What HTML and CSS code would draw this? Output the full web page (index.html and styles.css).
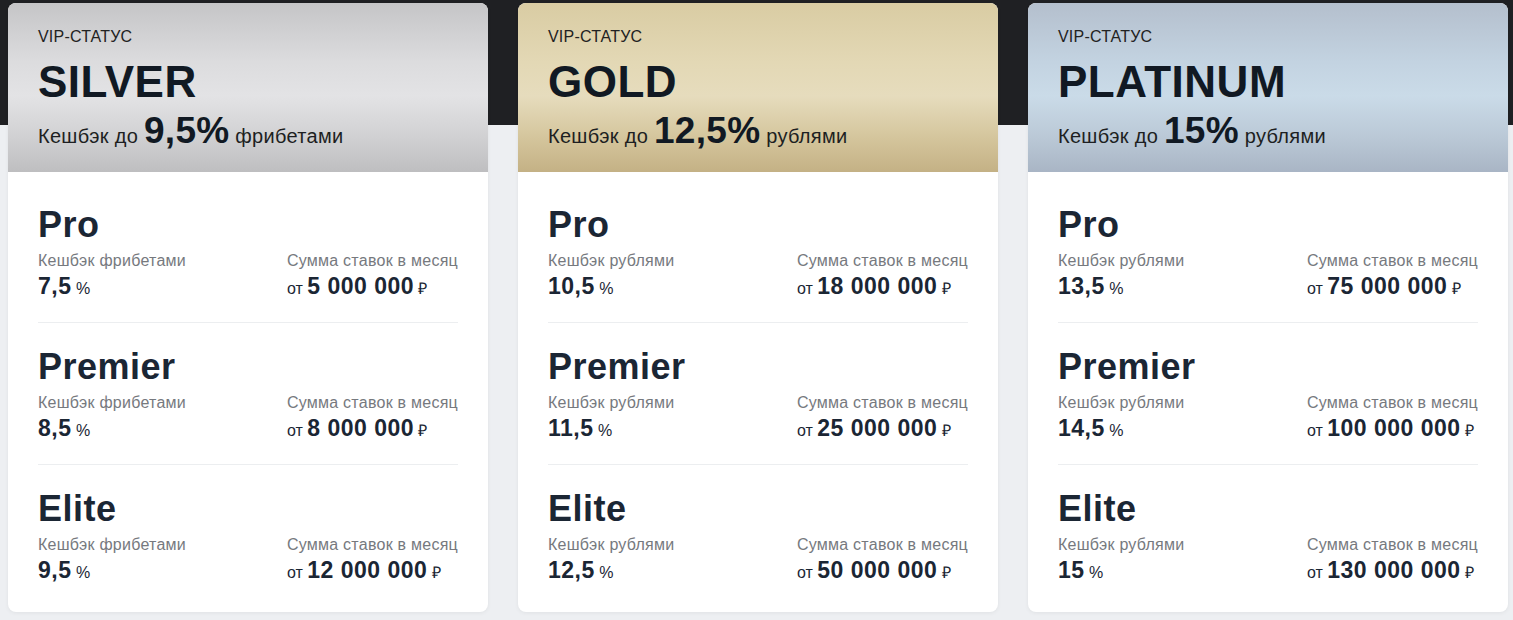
FILE: index.html
```html
<!DOCTYPE html>
<html lang="ru">
<head>
<meta charset="utf-8">
<link rel="stylesheet" href="styles.css">
</head>
<body>
<div class="page">
  <div class="cards">
    <section class="card">
      <header class="head silver">
        <div class="kicker">VIP-СТАТУС</div>
        <div class="level">SILVER</div>
        <div class="cb">Кешбэк до <b>9,5%</b> фрибетами</div>
      </header>
      <div class="body">
        <div class="row">
          <div class="tier">Pro</div>
          <div class="cols">
            <div class="col"><div class="lbl">Кешбэк фрибетами</div><div class="val"><b>7,5</b> %</div></div>
            <div class="col"><div class="lbl">Сумма ставок в месяц</div><div class="val">от <b>5 000 000</b> ₽</div></div>
          </div>
        </div>
        <div class="row">
          <div class="tier">Premier</div>
          <div class="cols">
            <div class="col"><div class="lbl">Кешбэк фрибетами</div><div class="val"><b>8,5</b> %</div></div>
            <div class="col"><div class="lbl">Сумма ставок в месяц</div><div class="val">от <b>8 000 000</b> ₽</div></div>
          </div>
        </div>
        <div class="row">
          <div class="tier">Elite</div>
          <div class="cols">
            <div class="col"><div class="lbl">Кешбэк фрибетами</div><div class="val"><b>9,5</b> %</div></div>
            <div class="col"><div class="lbl">Сумма ставок в месяц</div><div class="val">от <b>12 000 000</b> ₽</div></div>
          </div>
        </div>
      </div>
    </section>

    <section class="card">
      <header class="head gold">
        <div class="kicker">VIP-СТАТУС</div>
        <div class="level">GOLD</div>
        <div class="cb">Кешбэк до <b>12,5%</b> рублями</div>
      </header>
      <div class="body">
        <div class="row">
          <div class="tier">Pro</div>
          <div class="cols">
            <div class="col"><div class="lbl">Кешбэк рублями</div><div class="val"><b>10,5</b> %</div></div>
            <div class="col"><div class="lbl">Сумма ставок в месяц</div><div class="val">от <b>18 000 000</b> ₽</div></div>
          </div>
        </div>
        <div class="row">
          <div class="tier">Premier</div>
          <div class="cols">
            <div class="col"><div class="lbl">Кешбэк рублями</div><div class="val"><b>11,5</b> %</div></div>
            <div class="col"><div class="lbl">Сумма ставок в месяц</div><div class="val">от <b>25 000 000</b> ₽</div></div>
          </div>
        </div>
        <div class="row">
          <div class="tier">Elite</div>
          <div class="cols">
            <div class="col"><div class="lbl">Кешбэк рублями</div><div class="val"><b>12,5</b> %</div></div>
            <div class="col"><div class="lbl">Сумма ставок в месяц</div><div class="val">от <b>50 000 000</b> ₽</div></div>
          </div>
        </div>
      </div>
    </section>

    <section class="card">
      <header class="head platinum">
        <div class="kicker">VIP-СТАТУС</div>
        <div class="level">PLATINUM</div>
        <div class="cb">Кешбэк до <b>15%</b> рублями</div>
      </header>
      <div class="body">
        <div class="row">
          <div class="tier">Pro</div>
          <div class="cols">
            <div class="col"><div class="lbl">Кешбэк рублями</div><div class="val"><b>13,5</b> %</div></div>
            <div class="col"><div class="lbl">Сумма ставок в месяц</div><div class="val">от <b>75 000 000</b> ₽</div></div>
          </div>
        </div>
        <div class="row">
          <div class="tier">Premier</div>
          <div class="cols">
            <div class="col"><div class="lbl">Кешбэк рублями</div><div class="val"><b>14,5</b> %</div></div>
            <div class="col"><div class="lbl">Сумма ставок в месяц</div><div class="val">от <b>100 000 000</b> ₽</div></div>
          </div>
        </div>
        <div class="row">
          <div class="tier">Elite</div>
          <div class="cols">
            <div class="col"><div class="lbl">Кешбэк рублями</div><div class="val"><b>15</b> %</div></div>
            <div class="col"><div class="lbl">Сумма ставок в месяц</div><div class="val">от <b>130 000 000</b> ₽</div></div>
          </div>
        </div>
      </div>
    </section>
  </div>
</div>
</body>
</html>
```

FILE: styles.css
```css
* { box-sizing: border-box; }
html, body { margin: 0; padding: 0; }
body {
  font-family: "Liberation Sans", Arial, sans-serif;
  background: #edeff2;
  overflow: hidden;
}
.page {
  min-height: 620px;
  background: linear-gradient(to bottom, #1f2023 0, #1f2023 125px, #edeff2 125px);
  padding: 3px 8px 8px;
}
.cards {
  display: flex;
  gap: 30px;
}
.card {
  flex: 0 0 480px;
  background: #fff;
  border-radius: 8px;
  overflow: hidden;
  box-shadow: 0 1px 4px rgba(0,0,0,0.06);
}
.head {
  padding: 24px 30px 14px;
  color: #161b22;
}
.silver { background: linear-gradient(180deg, #c5c5c7 0%, #dcdcde 35%, #e3e3e5 55%, #d0d0d2 80%, #bebec0 100%); }
.gold { background: linear-gradient(180deg, #d9cca3 0%, #e3d8b5 35%, #e6dcbd 55%, #d4c59c 80%, #c4b185 100%); }
.platinum { background: linear-gradient(180deg, #b4bfcd 0%, #c3d3e1 35%, #cadbe8 55%, #bac8d6 80%, #a9b5c5 100%); }
.kicker {
  font-size: 16px;
  line-height: 20px;
  letter-spacing: 0.2px;
  color: #222;
}
.level {
  font-size: 44px;
  line-height: 48px;
  font-weight: 700;
  letter-spacing: 0.5px;
  margin-top: 11px;
  color: #111923;
}
.cb {
  font-size: 20px;
  line-height: 44px;
  letter-spacing: 0.3px;
  margin-top: 8px;
  color: #1d1f22;
}
.cb b {
  font-size: 37px;
  line-height: 0;
  font-weight: 700;
  color: #111923;
}
.body {
  padding: 9px 30px 6px;
}
.row {
  padding: 24px 0 19px;
}
.row + .row {
  border-top: 1px solid #eceef0;
}
.tier {
  font-size: 36px;
  line-height: 40px;
  font-weight: 700;
  letter-spacing: 0.5px;
  color: #1b2634;
}
.cols {
  display: flex;
  justify-content: space-between;
  margin-top: 6px;
}
.lbl {
  font-size: 16px;
  line-height: 20px;
  letter-spacing: 0.25px;
  color: #76797e;
}
.val {
  margin-top: 4px;
  font-size: 16px;
  line-height: 28px;
  color: #1b2634;
}
.val b {
  font-size: 23px;
  line-height: 0;
  letter-spacing: 0.5px;
  font-weight: 700;
}
```
